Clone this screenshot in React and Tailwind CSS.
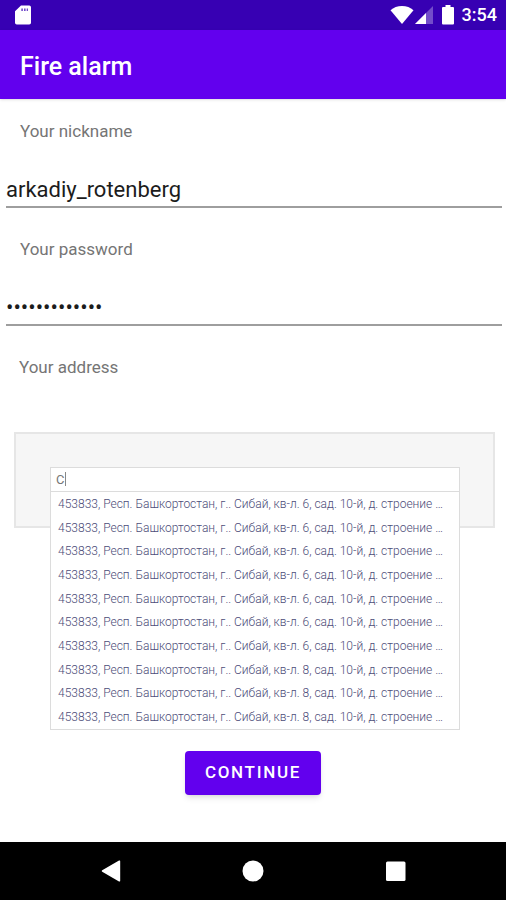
import { useState } from 'react'

const ADDRESSES = [6, 6, 6, 6, 6, 6, 6, 8, 8, 8].map(
    block => `453833, Респ. Башкортостан, г.. Сибай, кв-л. ${block}, сад. 10-й, д. строение …`
)

function StatusBar() {
    return (
        <div className="flex h-[30px] items-center justify-between bg-[#3700b3] pl-[15px] pr-[9px] text-white">
            <svg width="16" height="20" viewBox="0 0 16 20" fill="currentColor" aria-hidden="true">
                <path d="M6 0.5h8.2a1.8 1.8 0 0 1 1.8 1.8v15.4a1.8 1.8 0 0 1-1.8 1.8H1.8A1.8 1.8 0 0 1 0 17.700V6.300z" />
                <path d="M6.300 3.500h1.600v2.500H6.300zM9 3.500h1.600v2.500H9zM11.700 3.500h1.300v2.500h-1.300z" fill="#3700b3" opacity="0.7" />
            </svg>
            <div className="flex items-center">
                <svg width="24" height="18" viewBox="0 0 24 18" fill="currentColor" aria-hidden="true">
                    <path d="M12 18L0.500 4.200C3.500 1.500 7.500 0 12 0s8.500 1.500 11.500 4.200z" />
                </svg>
                <svg className="ml-px" width="18" height="18" viewBox="0 0 18 18" fill="currentColor" aria-hidden="true">
                    <path d="M18 0v18H0z" opacity="0.3" />
                    <path d="M11 7v11H0z" />
                </svg>
                <svg className="ml-[9px]" width="12" height="20" viewBox="0 0 12 20" fill="currentColor" aria-hidden="true">
                    <path d="M3.500 0h5v2H11a1 1 0 0 1 1 1v15.500a1 1 0 0 1-1 1H1a1 1 0 0 1-1-1V3a1 1 0 0 1 1-1h2.500z" />
                </svg>
                <span className="ml-2 text-[18px] font-medium leading-5">3:54</span>
            </div>
        </div>
    )
}

function Field({ id, label, type, value, onChange }) {
    return (
        <div className="pl-[6px] pr-1 pt-5">
            <label htmlFor={id} className="block pl-[14px] text-[17px] leading-6 text-[#757575]">
                {label}
            </label>
            <input
                id={id}
                type={type}
                value={value}
                onChange={e => onChange(e.target.value)}
                className="mt-7 block h-[37px] w-full border-b-2 border-[#9e9e9e] bg-transparent pt-[2px] text-[22px] text-[#1c1c1c] outline-none"
            />
        </div>
    )
}

function AddressPicker() {
    const [query, setQuery] = useState('С')

    return (
        <div className="ml-[14px] mr-[11px] mt-[53px] h-24 border-2 border-[#e6e6e6] bg-[#f6f6f6] pl-[34px] pr-[33px] pt-[33px]">
            <div className="relative">
                <input
                    id="address"
                    value={query}
                    onChange={e => setQuery(e.target.value)}
                    className="block h-[25px] w-full border border-[#dcdcdc] bg-white pl-[5px] text-[13px] text-[#777] outline-none"
                />
                <span className="absolute left-[15px] top-[5px] h-[14px] w-px bg-[#888]" />
                {/* Suggestions */}
                <ul className="absolute inset-x-0 top-full flex h-[238px] flex-col border border-t-0 border-[#dcdcdc] bg-white">
                    {ADDRESSES.map((address, i) => (
                        <li key={i} className="flex-1">
                            <button type="button" className="flex h-full w-full items-center whitespace-nowrap pl-[7px] text-[12px] font-light text-[#4c4c78]">
                                {address}
                            </button>
                        </li>
                    ))}
                </ul>
            </div>
        </div>
    )
}

function NavigationBar() {
    return (
        <nav className="mt-auto flex h-[58px] items-center justify-center gap-[118px] bg-black text-white">
            <button type="button" aria-label="Back">
                <svg width="24" height="24" viewBox="0 0 24 24" fill="currentColor">
                    <path d="M20 1.500a.8.8 0 0 1 1.200.7v19.600a.8.8 0 0 1-1.200.7L3.200 12.700a.8.8 0 0 1 0-1.400z" />
                </svg>
            </button>
            <button type="button" aria-label="Home">
                <svg width="24" height="24" viewBox="0 0 24 24" fill="currentColor">
                    <circle cx="12" cy="12" r="10.500" />
                </svg>
            </button>
            <button type="button" aria-label="Recent apps">
                <svg width="24" height="24" viewBox="0 0 24 24" fill="currentColor">
                    <rect x="3" y="2.500" width="19.500" height="19.500" rx="1.500" />
                </svg>
            </button>
        </nav>
    )
}

export default function App() {
    const [nickname, setNickname] = useState('arkadiy_rotenberg')
    const [password, setPassword] = useState('rotenberg1234')

    return (
        <div className="flex min-h-screen flex-col bg-white font-['Roboto',sans-serif]">
            <StatusBar />
            <header className="flex h-[69px] items-center bg-[#6200ee] px-5 pt-1 shadow">
                <h1 className="text-[25px] font-medium leading-8 text-white">Fire alarm</h1>
            </header>

            <form className="flex flex-col" onSubmit={e => e.preventDefault()}>
                <Field id="nickname" label="Your nickname" type="text" value={nickname} onChange={setNickname} />
                <div className="mt-[9px]">
                    <Field id="password" label="Your password" type="password" value={password} onChange={setPassword} />
                </div>
                <label htmlFor="address" className="mt-[29px] block pl-[19px] text-[17px] leading-6 text-[#757575]">
                    Your address
                </label>
                <AddressPicker />
                <button
                    type="submit"
                    className="mt-[223px] h-11 self-center rounded bg-[#6200ee] px-5 text-[17px] font-medium tracking-widest text-white shadow-md"
                >
                    CONTINUE
                </button>
            </form>

            <NavigationBar />
        </div>
    )
}
